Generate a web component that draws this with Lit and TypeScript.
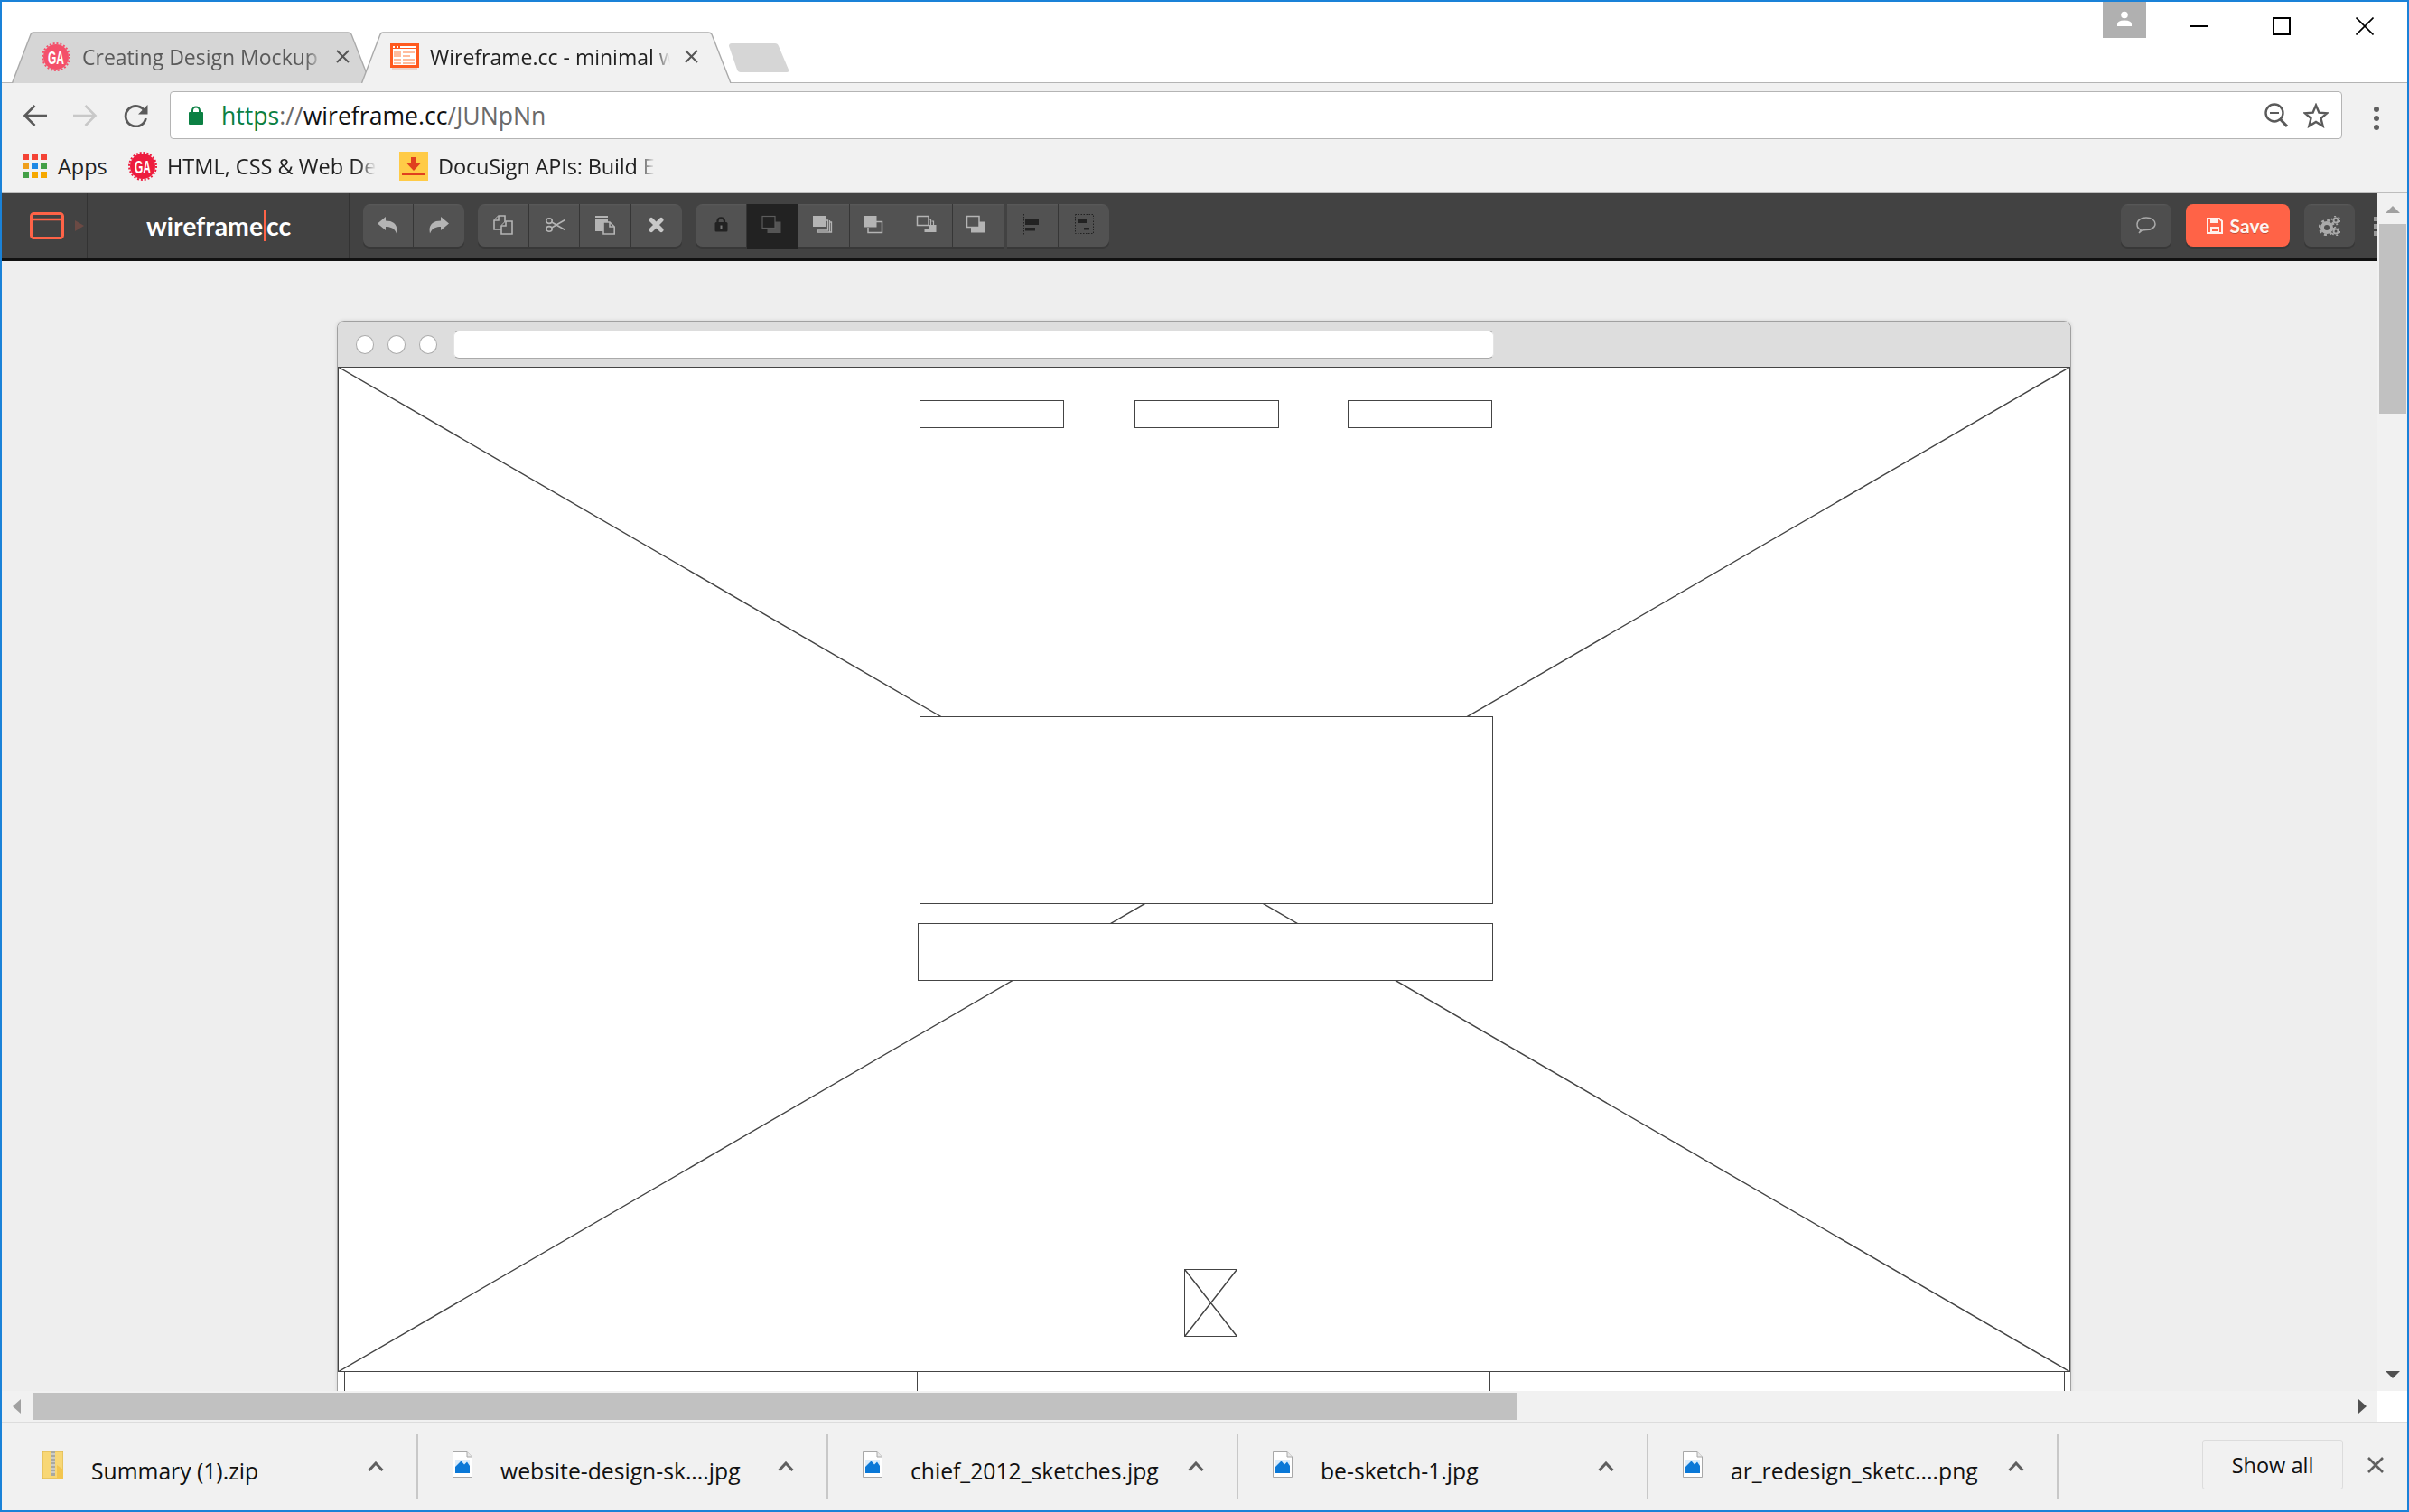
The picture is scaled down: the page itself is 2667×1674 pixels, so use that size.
import { LitElement, css, html, svg } from "lit";
import { customElement } from "lit/decorators.js";

const gaBadge = (fill: string) => html`
  <svg class="badge" viewBox="0 0 32 32">
    <circle cx="16" cy="16" r="14" fill=${fill}></circle>
    <circle cx="16" cy="16" r="15" fill="none" stroke=${fill} stroke-width="2" stroke-dasharray="2 1.93"></circle>
    <text x="16" y="23.500" text-anchor="middle" fill="#fff" font-family="Liberation Sans" font-weight="700" font-size="21" textLength="18" lengthAdjust="spacingAndGlyphs">GA</text>
  </svg>`;

const fileIcon = html`
  <svg class="file" viewBox="0 0 22 29">
    <path d="M.5 .5H16L21.500 6V28.500H.5Z" fill="#fff" stroke="#a8a8a8"></path>
    <path d="M16 .5V6H21.500" fill="#e8e8e8" stroke="#a8a8a8"></path>
    <rect x="3" y="9" width="16" height="15" fill="#0a78d7"></rect>
    <path d="M3 9H19V16L16 11.500L13 14.500L9.500 10.500L3 17Z" fill="#d8ebfb"></path>
  </svg>`;

const chevron = html`
  <svg class="chev" viewBox="0 0 18 11"><path d="M1.500 10L9 2L16.500 10" fill="none" stroke="#5f5f5f" stroke-width="3"></path></svg>`;

// tool button art, drawn in button coordinates (56 x 47)
const stroke = "#b4b4b4";
const tools = {
  undo: svg`<path transform="translate(16 14)" d="M0 7.500L9 0V4.500C18 4.500 23 9 21 18.500C19 13 15 11 9 11V15Z" fill=${stroke}></path>`,
  redo: svg`<path transform="translate(17 14) translate(22 0) scale(-1 1)" d="M0 7.500L9 0V4.500C18 4.500 23 9 21 18.500C19 13 15 11 9 11V15Z" fill=${stroke}></path>`,
  copy: svg`<g transform="translate(17 12)" fill="#525252" stroke=${stroke} stroke-width="1.6">
    <path d="M6 1H13V16H1V6Z"></path><path d="M6 1V6H1"></path>
    <path d="M14 7H21V21H9V12Z"></path><path d="M14 7V12H9"></path></g>`,
  cut: svg`<g transform="translate(18 15)" fill="none" stroke=${stroke} stroke-width="1.6">
    <ellipse cx="4" cy="3.6" rx="3.2" ry="2.8"></ellipse><ellipse cx="4" cy="12.4" rx="3.2" ry="2.8"></ellipse>
    <path d="M6.800 5L21.500 13.500M6.800 11L21.500 2.500"></path></g>`,
  paste: svg`<g transform="translate(17 12)">
    <path d="M0 1H14V3H0ZM0 4H14V18H0Z" fill=${stroke}></path>
    <path d="M9 8H16L21.200 13V21H9Z" fill="#525252" stroke=${stroke} stroke-width="1.6"></path>
    <path d="M16 8V13H21" fill="none" stroke=${stroke} stroke-width="1.6"></path></g>`,
  del: svg`<path d="M22 17.500L33 28.500M33 17.500L22 28.500" stroke="#c8c8c8" stroke-width="5" stroke-linecap="round"></path>`,
  lock: svg`<path d="M24.500 20.500V18.500A3.800 3.800 0 0 1 32 18.500V20.500" fill="none" stroke="#222" stroke-width="2.200"></path>
    <rect x="21.500" y="20" width="14" height="10.500" rx="1.500" fill="#222"></rect><rect x="27.500" y="23.500" width="2" height="4" fill="#777"></rect>`,
  back: svg`<path d="M28.500 19.500H37.500V32H22.500V26.500H28.500Z" fill="#555"></path>
    <rect x="17" y="13.500" width="14" height="13" fill="#222" stroke="#5c5c5c" stroke-width="1.200"></rect>`,
  front: svg`<path d="M31 18H32.500V29H21V31H34.500V18M34.500 20H36.500V31H21" fill="none" stroke=${stroke} stroke-width="1.300"></path>
    <rect x="16" y="13" width="15" height="12" fill=${stroke}></rect>`,
  forward: svg`<path d="M29 19.500H35.500V31.500H20V26" fill="none" stroke=${stroke} stroke-width="1.500"></path>
    <rect x="15" y="13" width="14.500" height="12.500" fill=${stroke}></rect>`,
  backward: svg`<path d="M30.500 17H32.500V25M33.500 19H35.500V25" fill="none" stroke=${stroke} stroke-width="1.200"></path>
    <path d="M30 23H38.500V31H25.500V27H30Z" fill=${stroke}></path>
    <rect x="17.500" y="13.500" width="12.500" height="10" fill="#525252" stroke=${stroke} stroke-width="1.500"></rect>`,
  toback: svg`<path d="M29 19.500H35.500V31.500H20V26H29Z" fill=${stroke}></path>
    <rect x="15.500" y="13.500" width="13.500" height="12" fill="#525252" stroke=${stroke} stroke-width="1.500"></rect>`,
  alignL: svg`<path d="M18.500 11V35" stroke="#222" stroke-width="1" stroke-dasharray="1.500 1.500"></path>
    <rect x="20" y="16" width="15" height="7" fill="#222"></rect><rect x="20" y="26" width="11" height="3.500" fill="#222"></rect>`,
  alignC: svg`<rect x="18.500" y="11.500" width="20" height="21" fill="none" stroke="#222" stroke-dasharray="1.500 1.500"></rect>
    <rect x="21" y="16" width="10" height="5" fill="#222"></rect><rect x="28" y="26" width="6" height="2.500" fill="#222"></rect>`,
};

interface Tool {
  art: unknown;
  on?: boolean;
  w?: number;
}

const groups: Tool[][] = [
  [{ art: tools.undo, w: 56 }, { art: tools.redo, w: 56 }],
  [
    { art: tools.copy, w: 56.5 },
    { art: tools.cut, w: 56.5 },
    { art: tools.paste, w: 56.5 },
    { art: tools.del, w: 56.5 },
  ],
  [
    { art: tools.lock, w: 57 },
    { art: tools.back, on: true, w: 57 },
    { art: tools.front, w: 57 },
    { art: tools.forward, w: 57 },
    { art: tools.backward, w: 57 },
    { art: tools.toback, w: 57 },
    { art: null },
    { art: tools.alignL, w: 56.5 },
    { art: tools.alignC, w: 56.5 },
  ],
];

const downloads = [
  { name: "Summary (1).zip", zip: true },
  { name: "website-design-sk....jpg" },
  { name: "chief_2012_sketches.jpg" },
  { name: "be-sketch-1.jpg" },
  { name: "ar_redesign_sketc....png" },
];

// shapes on the wireframe canvas, in canvas coordinates
const shapes = [
  [644, 36, 160, 31],
  [882, 36, 160, 31],
  [1118, 36, 160, 31],
  [644, 386, 635, 208],
  [642, 615, 637, 64],
  [7, 1111, 635, 120],
  [641, 1111, 635, 120],
  [1275, 1111, 637, 120],
];

const appColors = ["#f44336", "#f44336", "#f44336", "#ef9f1c", "#1e88e5", "#43a047", "#43a047", "#f6a800", "#f6a800"];

@customElement("app-root")
export class AppRoot extends LitElement {
  static styles = css`
    :host {
      display: flex;
      flex-direction: column;
      box-sizing: border-box;
      width: 2667px;
      height: 1674px;
      border: solid #1a82d8;
      border-width: 2px;
      overflow: hidden;
      background: #f1f1f1;
      font-family: "Open Sans", "Noto Sans", sans-serif;
      color: #1a1a1a;
    }
    svg {
      display: block;
      flex: none;
    }

    /* tab strip */
    .strip {
      display: flex;
      align-items: flex-end;
      box-sizing: border-box;
      height: 90px;
      padding-left: 11px;
      background: #fff;
      border-bottom: 1px solid #b4b4b4;
    }
    .tab {
      position: relative;
      display: flex;
      align-items: center;
      box-sizing: border-box;
      height: 57px;
      margin-bottom: -1px;
      font-size: 23px;
      color: #5a5a5a;
    }
    .tab.one {
      width: 398px;
      padding: 0 24px 2px 33px;
    }
    .tab.two {
      width: 410px;
      margin-left: -11px;
      padding: 0 37px 2px 32px;
      color: #222;
    }
    .tab-shape {
      position: absolute;
      left: 0;
      top: 0;
    }
    .badge {
      position: relative;
      width: 32px;
      height: 32px;
    }
    .tab-label {
      position: relative;
      width: 266px;
      margin-left: 13px;
      white-space: nowrap;
      -webkit-mask-image: linear-gradient(90deg, #000 93%, transparent);
      mask-image: linear-gradient(90deg, #000 93%, transparent);
    }
    .tab-x {
      position: relative;
      width: 15px;
      height: 15px;
      margin-left: auto;
    }
    .favicon {
      position: relative;
      width: 32px;
      height: 30px;
    }
    .tab.two .tab-label {
      margin-left: 12px;
    }
    .newtab {
      width: 68px;
      height: 33px;
      margin: 0 0 10px -4px;
    }
    .win {
      display: flex;
      align-self: flex-start;
      align-items: flex-start;
      margin-left: auto;
      padding-right: 37px;
    }
    .profile {
      display: flex;
      justify-content: center;
      width: 48px;
      height: 40px;
      padding-top: 10px;
      box-sizing: border-box;
      background: #b0b0b0;
    }
    .win-btn {
      width: 20px;
      height: 20px;
      margin: 17px 0 0 72px;
    }
    .win-btn.first {
      margin-left: 48px;
    }

    /* nav row */
    .nav {
      display: flex;
      align-items: flex-start;
      height: 68px;
      box-sizing: border-box;
      padding: 9px 0 0 23px;
    }
    .nav-btn {
      margin-top: 14px;
    }
    .nav-btn.fwd {
      margin-left: 27px;
    }
    .nav-btn.reload {
      margin-left: 28px;
    }
    .omni {
      display: flex;
      align-items: center;
      box-sizing: border-box;
      width: 2405px;
      height: 53px;
      margin-left: 23px;
      padding: 0 14px 0 20px;
      background: #fff;
      border: 1px solid #b4b4b4;
      border-radius: 4px;
      font-size: 26.6px;
      color: #6a6a6a;
    }
    .url {
      margin-left: 20px;
      white-space: nowrap;
    }
    .url b {
      font-weight: 400;
      color: #0b8043;
    }
    .url i {
      font-style: normal;
      color: #111;
    }
    .omni-end {
      display: flex;
      gap: 17px;
      margin-left: auto;
    }
    .kebab {
      margin: 17px 0 0 35px;
    }

    /* bookmarks */
    .marks {
      display: flex;
      align-items: flex-start;
      box-sizing: border-box;
      height: 54px;
      padding: 8px 0 0 23px;
      border-bottom: 1px solid #bdbdbd;
      font-size: 23.5px;
      color: #222;
    }
    .apps {
      display: grid;
      grid-template-columns: repeat(3, 7px);
      grid-auto-rows: 7px;
      gap: 3px;
      margin-top: 2px;
    }
    .mark {
      display: flex;
      white-space: nowrap;
      line-height: 32px;
    }
    .mark span {
      margin-left: 11px;
    }
    .mark.fade span {
      -webkit-mask-image: linear-gradient(90deg, #000 92%, transparent);
      mask-image: linear-gradient(90deg, #000 92%, transparent);
    }
    .mark.m1 {
      width: 60px;
      margin-left: 12px;
    }
    .mark.m1 span {
      margin-left: 0;
    }
    .mark.m2 {
      margin-left: 18px;
      width: 272px;
    }
    .mark.m3 {
      margin-left: 28px;
      width: 276px;
      letter-spacing: -0.15px;
    }

    /* main area */
    .main {
      display: flex;
      height: 1326px;
    }
    .page {
      display: flex;
      flex-direction: column;
      width: 2630px;
    }

    /* app toolbar */
    .bar {
      display: flex;
      align-items: flex-start;
      box-sizing: border-box;
      height: 75px;
      background: #424242;
      border-bottom: 3px solid #111;
      overflow: hidden;
    }
    .logo-cell {
      display: flex;
      align-items: center;
      gap: 12px;
      box-sizing: border-box;
      width: 95px;
      height: 72px;
      padding-left: 31px;
      border-right: 1px solid #333;
    }
    .brand {
      box-sizing: border-box;
      width: 290px;
      height: 72px;
      padding-left: 65px;
      border-right: 1px solid #333;
      color: #fff;
      font: 700 28.4px/72px Lato, "Open Sans", sans-serif;
      white-space: nowrap;
    }
    .brand u {
      text-decoration: none;
      margin: 0 1px;
      border-left: 2px solid #ff6347;
    }
    .group {
      display: flex;
      margin: 12px 0 0 15px;
      border-radius: 8px;
      box-shadow: 0 3px 0 #383838;
    }
    .tool {
      box-sizing: border-box;
      height: 47px;
      background: linear-gradient(#5a5a5a 0, #525252 2px);
      border-right: 1px solid #363636;
    }
    .tool:first-child {
      border-radius: 8px 0 0 8px;
    }
    .tool:last-child {
      border-right: 0;
      border-radius: 0 8px 8px 0;
    }
    .tool.on {
      background: #222;
      box-shadow: 0 3px 0 #222;
      border-right-color: #222;
    }
    .tool.gap {
      width: 3px;
      background: #424242;
      border: 0;
      box-shadow: 0 3px 0 #424242;
    }
    .bar-end {
      display: flex;
      margin: 12px -4px 0 auto;
    }
    .round {
      display: flex;
      align-items: center;
      justify-content: center;
      box-sizing: border-box;
      width: 56px;
      height: 47px;
      margin-right: 16px;
      border-radius: 8px;
      background: linear-gradient(#5a5a5a 0, #4e4e4e 2px);
      box-shadow: 0 3px 0 #383838;
    }
    .save {
      gap: 8px;
      width: 115px;
      background: #ff6347;
      box-shadow: 0 3px 0 #383838;
      color: #fff4f0;
      font: 700 21px Lato, "Open Sans", sans-serif;
      text-shadow: 0 1px 0 rgba(0, 0, 0, 0.25);
    }
    .bar-dots {
      margin: 10px 0 0 5px;
    }

    /* wireframe canvas */
    .canvas {
      position: relative;
      flex: 1;
      background: #eee;
      overflow: hidden;
    }
    .frame {
      position: absolute;
      left: 371px;
      top: 66px;
      display: flex;
      flex-direction: column;
      box-sizing: border-box;
      width: 1920px;
      height: 1400px;
      border: 1px solid #a0a0a0;
      border-radius: 8px 8px 0 0;
      box-shadow: 0 0 4px rgba(0, 0, 0, 0.12);
    }
    .title {
      display: flex;
      align-items: center;
      gap: 15px;
      flex: none;
      height: 50px;
      padding-left: 20px;
      background: #ddd;
      border-radius: 7px 7px 0 0;
      border-bottom: 1px solid #444;
    }
    .dot {
      box-sizing: border-box;
      width: 20px;
      height: 21px;
      border-radius: 50%;
      background: #fff;
      border: 1px solid #aaa;
    }
    .addr {
      box-sizing: border-box;
      width: 1152px;
      height: 31px;
      margin-left: 3px;
      background: #fff;
      border: 1px solid #e4e4e4;
      border-top-color: #aaa;
      border-bottom-color: #aaa;
      border-radius: 6px;
    }
    .stage {
      position: relative;
      flex: 1;
      background: #fff;
    }
    .cross {
      position: absolute;
      left: 0;
      top: -1px;
    }
    .shape {
      position: absolute;
      box-sizing: border-box;
      background: #fff;
      border: 1px solid #444;
    }
    .pic {
      position: absolute;
      left: 937px;
      top: 998px;
    }

    /* scrollbars */
    .vbar {
      display: flex;
      flex-direction: column;
      align-items: center;
      width: 33px;
      background: #f1f1f1;
    }
    .thumb-v {
      width: 30px;
      height: 210px;
      margin-top: 12px;
      background: #c1c1c1;
    }
    .arrow-up {
      margin-top: 14px;
    }
    .arrow-down {
      margin: auto 0 14px;
    }
    .hbar {
      display: flex;
      align-items: center;
      height: 34px;
    }
    .hbar-track {
      display: flex;
      align-items: center;
      width: 2630px;
      height: 34px;
      padding-left: 12px;
      box-sizing: border-box;
      background: #f1f1f1;
    }
    .thumb-h {
      width: 1643px;
      height: 30px;
      margin-left: 13px;
      background: #c1c1c1;
    }
    .hbar-corner {
      width: 33px;
      height: 34px;
      background: #fff;
    }
    .arrow-right {
      margin-left: 932px;
    }

    /* download shelf */
    .shelf {
      display: flex;
      flex: 1;
      border-top: 2px solid #dcdcdc;
      font-size: 24.7px;
      color: #111;
    }
    .item {
      display: flex;
      align-items: flex-start;
      box-sizing: border-box;
      width: 454px;
      height: 72px;
      margin-top: 12px;
      padding: 19px 36px 0 38px;
      border-right: 2px solid #c8c8c8;
    }
    .item.first {
      width: 461px;
      padding-left: 45px;
    }
    .file {
      width: 22px;
      height: 29px;
    }
    .zip {
      width: 23px;
      height: 30px;
    }
    .item-name {
      margin: 7px 0 0 31px;
      line-height: 30px;
      white-space: nowrap;
    }
    .chev {
      width: 18px;
      height: 11px;
      margin: 11px 0 0 auto;
    }
    .showall {
      display: flex;
      align-items: center;
      justify-content: center;
      box-sizing: border-box;
      width: 156px;
      height: 55px;
      margin: 18px 0 0 auto;
      border: 1px solid #dcdcdc;
      border-radius: 3px;
      font-size: 23.5px;
    }
    .shelf-x {
      width: 18px;
      height: 18px;
      margin: 37px 26px 0 27px;
    }
  `;

  private renderTab(cls: string, w: number, fill: string, icon: unknown, label: string) {
    return html`
      <div class="tab ${cls}">
        <svg class="tab-shape" width=${w} height="57" viewBox="0 0 ${w} 57">
          <path d="M.5 57L21 3Q22 1 24 1H${w - 26}Q${w - 23} 1 ${w - 22} 3L${w - 1} 57" fill=${fill} stroke="#aaa" stroke-width="1.4"></path>
        </svg>
        ${icon}
        <span class="tab-label">${label}</span>
        <svg class="tab-x" viewBox="0 0 15 15"><path d="M1 1L14 14M14 1L1 14" stroke="#555" stroke-width="2"></path></svg>
      </div>`;
  }

  private renderStrip() {
    const favicon = html`
      <svg class="favicon" viewBox="0 0 32 30">
        <rect x="2" y="27" width="28" height="3" fill="#ecd3ca"></rect>
        <rect x="1.500" y="1.500" width="29" height="24" fill="#fff" stroke="#ff5a1f" stroke-width="3"></rect>
        <path d="M2 2H30V6H2Z" fill="#ff5a1f"></path>
        <path d="M3 3H5V5H3ZM7 3H9V5H7ZM11 3H28V5H11Z" fill="#fff"></path>
        <path d="M4 8H12V15H4ZM14 9H27V11H14ZM14 13H22V15H14ZM4 17H12V19H4ZM14 17H27V19H14ZM4 21H12V23H4ZM14 21H27V23H14Z" fill="#ffbc9d"></path>
      </svg>`;
    return html`
      <div class="strip">
        ${this.renderTab("one", 398, "#d6d6d6", gaBadge("#f4506a"), "Creating Design Mockup")}
        ${this.renderTab("two", 410, "#f1f1f1", favicon, "Wireframe.cc - minimal w")}
        <svg class="newtab" viewBox="0 0 68 33"><path d="M1 3Q1 0 4 0H52Q55 0 56 3L67 29Q68 32 65 32H14Q11 32 10 29Z" fill="#d6d6d6"></path></svg>
        <div class="win">
          <div class="profile">
            <svg width="18" height="20" viewBox="0 0 18 20"><circle cx="9" cy="4.500" r="3.800" fill="#fff"></circle><path d="M1 15Q1 10.500 9 10.500T17 15V17H1Z" fill="#fff"></path></svg>
          </div>
          <svg class="win-btn first" viewBox="0 0 20 20"><path d="M0 10H20" stroke="#000" stroke-width="2"></path></svg>
          <svg class="win-btn" viewBox="0 0 20 20"><rect x="1" y="1" width="18" height="18" fill="none" stroke="#000" stroke-width="2"></rect></svg>
          <svg class="win-btn" viewBox="0 0 20 20"><path d="M.5 .5L19.500 19.500M19.500 .5L.5 19.500" stroke="#000" stroke-width="1.600"></path></svg>
        </div>
      </div>`;
  }

  private renderNav() {
    return html`
      <div class="nav">
        <svg class="nav-btn" width="28" height="26" viewBox="0 0 28 26"><path d="M27 13H3M13.500 2L2.500 13L13.500 24" fill="none" stroke="#5a5a5a" stroke-width="2.600"></path></svg>
        <svg class="nav-btn fwd" width="28" height="26" viewBox="0 0 28 26"><path d="M1 13H25M14.500 2L25.500 13L14.500 24" fill="none" stroke="#c8c8c8" stroke-width="2.600"></path></svg>
        <svg class="nav-btn reload" width="29" height="26" viewBox="0 0 29 26"><path d="M24.500 8.500A11.300 11.300 0 1 0 25.500 16" fill="none" stroke="#5a5a5a" stroke-width="2.800"></path><path d="M27.500 1V11.500H17Z" fill="#5a5a5a"></path></svg>
        <div class="omni">
          <svg width="16" height="21" viewBox="0 0 16 21"><path d="M4 8V5.500A4 4 0 0 1 12 5.500V8" fill="none" stroke="#0b8043" stroke-width="2"></path><rect y="7" width="16" height="14" rx="1" fill="#0b8043"></rect></svg>
          <span class="url"><b>https</b>://<i>wireframe.cc</i>/JUNpNn</span>
          <div class="omni-end">
            <svg width="26" height="27" viewBox="0 0 26 27"><circle cx="11" cy="11" r="9.500" fill="none" stroke="#5a5a5a" stroke-width="2.400"></circle><path d="M6 11H16" stroke="#5a5a5a" stroke-width="2"></path><path d="M17.500 18L25 26" stroke="#5a5a5a" stroke-width="3"></path></svg>
            <svg width="28" height="28" viewBox="0 0 28 28"><path d="M14 2.500L17.400 10.600L26.200 11.300L19.500 17L21.600 25.600L14 21L6.400 25.600L8.500 17L1.800 11.300L10.600 10.600Z" fill="none" stroke="#5a5a5a" stroke-width="2.400"></path></svg>
          </div>
        </div>
        <svg class="kebab" width="6" height="26" viewBox="0 0 6 26"><circle cx="3" cy="3" r="3" fill="#5f5f5f"></circle><circle cx="3" cy="13" r="3" fill="#5f5f5f"></circle><circle cx="3" cy="23" r="3" fill="#5f5f5f"></circle></svg>
      </div>`;
  }

  private renderMarks() {
    return html`
      <div class="marks">
        <div class="apps">${appColors.map((c) => html`<i style="background:${c}"></i>`)}</div>
        <div class="mark m1"><span>Apps</span></div>
        <div class="mark m2 fade">${gaBadge("#ed1c3e")}<span>HTML, CSS &amp; Web De</span></div>
        <div class="mark m3 fade">
          <svg width="32" height="32" viewBox="0 0 32 32"><rect width="32" height="32" fill="#ffcb47"></rect><path d="M13 6H19V13H23.500L16 21L8.500 13H13Z" fill="#e0401f"></path><rect x="3" y="24" width="26" height="2" fill="#e0401f"></rect></svg>
          <span>DocuSign APIs: Build E</span>
        </div>
      </div>`;
  }

  private renderBar() {
    return html`
      <div class="bar">
        <div class="logo-cell">
          <svg width="38" height="30" viewBox="0 0 38 30"><rect x="1.500" y="1.500" width="35" height="27" rx="3" fill="none" stroke="#ff6347" stroke-width="3"></rect><path d="M2 8H36" stroke="#ff6347" stroke-width="2.500"></path></svg>
          <svg width="10" height="12" viewBox="0 0 10 12"><path d="M0 0L10 6L0 12Z" fill="#6b4a44"></path></svg>
        </div>
        <div class="brand">wireframe<u></u>cc</div>
        ${groups.map(
          (g) => html`
            <div class="group">
              ${g.map((t) =>
                t.art === null
                  ? html`<div class="tool gap"></div>`
                  : html`<div class="tool ${t.on ? "on" : ""}" style="width:${t.w}px"><svg width="56" height="47" viewBox="0 0 56 47">${t.art}</svg></div>`
              )}
            </div>`
        )}
        <div class="bar-end">
          <div class="round">
            <svg width="22" height="19" viewBox="0 0 22 19"><path d="M5 14.500C2 13 1 11 1 8.500C1 4 5 1 11 1S21 4 21 8C21 12 16.500 14.500 11 14.500C9 14.500 8 14.500 6.500 15L3 18C4 16.500 5 15.500 5 14.500Z" fill="none" stroke="#aaa" stroke-width="1.500"></path></svg>
          </div>
          <div class="round save">
            <svg width="18" height="18" viewBox="0 0 18 18"><path d="M1 1H14L17 4V17H1Z" fill="none" stroke="#fff0ec" stroke-width="2"></path><path d="M4 1H13V6H4ZM4 10H14V17H4Z" fill="#fff0ec"></path><path d="M6 12H12V15H6Z" fill="#ff6347"></path></svg>
            Save
          </div>
          <div class="round">
            <svg width="24" height="22" viewBox="0 0 24 22">
              <circle cx="9" cy="13" r="5" fill="none" stroke="#aaa" stroke-width="4"></circle>
              <circle cx="9" cy="13" r="8" fill="none" stroke="#aaa" stroke-width="2.500" stroke-dasharray="3 3.280"></circle>
              <circle cx="19" cy="5" r="2.500" fill="none" stroke="#aaa" stroke-width="2"></circle>
              <circle cx="19" cy="5" r="4.500" fill="none" stroke="#aaa" stroke-width="1.600" stroke-dasharray="2 2.700"></circle>
              <circle cx="19" cy="17" r="2.500" fill="none" stroke="#aaa" stroke-width="2"></circle>
              <circle cx="19" cy="17" r="4.500" fill="none" stroke="#aaa" stroke-width="1.600" stroke-dasharray="2 2.700"></circle>
            </svg>
          </div>
          <svg class="bar-dots" width="8" height="26" viewBox="0 0 8 26"><rect y="4" width="8" height="5" fill="#999"></rect><rect y="12" width="8" height="5" fill="#999"></rect><rect y="20" width="8" height="5" fill="#999"></rect></svg>
        </div>
      </div>`;
  }

  private renderCanvas() {
    return html`
      <div class="canvas">
        <div class="frame">
          <div class="title">
            <div class="dot"></div>
            <div class="dot"></div>
            <div class="dot"></div>
            <div class="addr"></div>
          </div>
          <div class="stage">
            <svg class="cross" width="1918" height="1113" viewBox="0 0 1918 1113">
              <rect x=".5" y=".5" width="1917" height="1112" fill="#fff" stroke="#444"></rect>
              <path d="M0 0L1918 1113M1918 0L0 1113" stroke="#444" stroke-width="1.400"></path>
            </svg>
            ${shapes.map(
              ([x, y, w, h]) => html`<div class="shape" style="left:${x}px;top:${y}px;width:${w}px;height:${h}px"></div>`
            )}
            <svg class="pic" width="59" height="75" viewBox="0 0 59 75">
              <rect x=".5" y=".5" width="58" height="74" fill="#fff" stroke="#444"></rect>
              <path d="M1 1L58 74M58 1L1 74" stroke="#444" stroke-width="1.400"></path>
            </svg>
          </div>
        </div>
      </div>`;
  }

  private renderShelf() {
    return html`
      <div class="shelf">
        ${downloads.map(
          (d, i) => html`
            <div class="item ${i === 0 ? "first" : ""}">
              ${d.zip
                ? html`<svg class="zip" viewBox="0 0 23 30">
                    <path d="M0 0H23V30H0Z" fill="#f8d775" stroke="#d8b24c"></path>
                    <path d="M16 15L23 20V30H16Z" fill="#f3c64f"></path>
                    <rect x="10" y="0" width="4" height="27" fill="#a9a9a0"></rect>
                    <path d="M10 3H14M10 7H14M10 11H14M10 15H14M10 19H14M10 23H14" stroke="#eee" stroke-width="1"></path>
                  </svg>`
                : fileIcon}
              <span class="item-name">${d.name}</span>
              ${chevron}
            </div>`
        )}
        <div class="showall">Show all</div>
        <svg class="shelf-x" viewBox="0 0 18 18"><path d="M1 1L17 17M17 1L1 17" stroke="#5f5f5f" stroke-width="2.600"></path></svg>
      </div>`;
  }

  render() {
    return html`
      ${this.renderStrip()} ${this.renderNav()} ${this.renderMarks()}
      <div class="main">
        <div class="page">${this.renderBar()} ${this.renderCanvas()}</div>
        <div class="vbar">
          <svg class="arrow-up" width="16" height="8" viewBox="0 0 16 8"><path d="M8 0L16 8H0Z" fill="#a0a0a0"></path></svg>
          <div class="thumb-v"></div>
          <svg class="arrow-down" width="16" height="8" viewBox="0 0 16 8"><path d="M0 0H16L8 8Z" fill="#505050"></path></svg>
        </div>
      </div>
      <div class="hbar">
        <div class="hbar-track">
          <svg width="9" height="16" viewBox="0 0 9 16"><path d="M9 0V16L0 8Z" fill="#a0a0a0"></path></svg>
          <div class="thumb-h"></div>
          <svg class="arrow-right" width="9" height="16" viewBox="0 0 9 16"><path d="M0 0V16L9 8Z" fill="#505050"></path></svg>
        </div>
        <div class="hbar-corner"></div>
      </div>
      ${this.renderShelf()}
    `;
  }
}
